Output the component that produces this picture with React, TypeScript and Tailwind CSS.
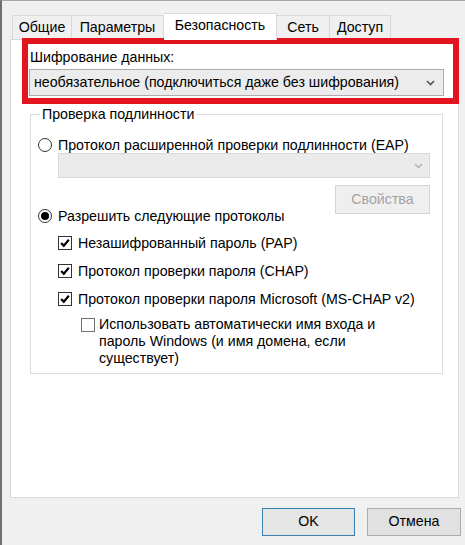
import React from "react";

const font = { fontFamily: '"Liberation Sans", Arial, sans-serif' };

function Chevron({ color }: { color: string }) {
  return (
    <svg width="9" height="6" viewBox="0 0 9 6">
      <path d="M1 1 L4.5 4.5 L8 1" fill="none" stroke={color} strokeWidth="1.6" />
    </svg>
  );
}

function CheckBox({ checked }: { checked: boolean }) {
  return (
    <div
      className={
        "w-[14px] h-[14px] bg-white flex items-center justify-center shrink-0 border " +
        (checked ? "border-[#333333]" : "border-[#707070]")
      }
    >
      {checked && (
        <svg width="10" height="10" viewBox="0 0 10 10">
          <path d="M1.2 5 L3.8 7.8 L8.8 1.8" fill="none" stroke="#000" strokeWidth="2.2" />
        </svg>
      )}
    </div>
  );
}

function Radio({ checked }: { checked: boolean }) {
  return (
    <div className="w-[14px] h-[14px] rounded-full border border-[#333333] bg-white flex items-center justify-center shrink-0">
      {checked && <div className="w-[8px] h-[8px] rounded-full bg-black" />}
    </div>
  );
}

export default function App() {
  return (
    <div
      className="w-[465px] h-[545px] bg-[#f0f0f0] border-l-2 border-t border-l-[#6f6f6f] border-t-[#a8a8a8] relative overflow-hidden text-[14.2px] text-black"
      style={font}
    >
      {/* tabs */}
      <div className="flex items-end ml-[10px] mt-[11px] h-[27px]">
        <div className="w-[60px] h-[24px] border border-b-0 border-[#d9d9d9] bg-[#f0f0f0] flex items-center justify-center">
          Общие
        </div>
        <div className="w-[92px] h-[24px] border border-b-0 border-l-0 border-[#d9d9d9] bg-[#f0f0f0] flex items-center justify-center">
          Параметры
        </div>
        <div className="relative z-10 w-[113px] h-[27px] -mb-px border border-b-0 border-l-0 border-[#d9d9d9] bg-white flex items-center justify-center pb-[3px]">
          Безопасность
        </div>
        <div className="w-[53px] h-[24px] border border-b-0 border-l-0 border-[#d9d9d9] bg-[#f0f0f0] flex items-center justify-center">
          Сеть
        </div>
        <div className="w-[61px] h-[24px] border border-b-0 border-l-0 border-[#d9d9d9] bg-[#f0f0f0] flex items-center justify-center">
          Доступ
        </div>
      </div>

      {/* panel */}
      <div className="ml-[8px] w-[449px] h-[459px] border border-[#d9d9d9] bg-white flex flex-col">
        <div className="ml-[19px] mt-[7px] h-[20px] leading-[20px]">Шифрование данных:</div>
        <div className="ml-[18px] mt-[2px] w-[415px] h-[27px] border border-[#acacac] bg-[#ececec] flex items-center justify-between pl-[4px] pr-[8px]">
          <span>необязательное (подключиться даже без шифрования)</span>
          <Chevron color="#555555" />
        </div>

        {/* group box */}
        <div className="relative ml-[19px] mt-[18px] w-[413px] h-[260px] border border-[#dcdcdc] flex flex-col">
          <div className="absolute left-[9px] -top-[11px] bg-white px-[2px] leading-[20px]">
            Проверка подлинности
          </div>
          <div className="ml-[7px] mt-[23px] h-[14px] flex items-center gap-[6px]">
            <Radio checked={false} />
            <span className="leading-[14px] whitespace-nowrap">
              Протокол расширенной проверки подлинности (EAP)
            </span>
          </div>
          <div className="ml-[27px] mt-[1px] w-[372px] h-[25px] border border-[#d9d9d9] bg-[#ebebeb] flex items-center justify-end pr-[6px]">
            <Chevron color="#b5b5b5" />
          </div>
          <div className="self-end mr-[12px] mt-[7px] w-[95px] h-[29px] border border-[#d5d5d5] bg-[#efefef] flex items-center justify-center text-[#a3a3a3]">
            Свойства
          </div>
          <div className="ml-[7px] -mt-[5px] h-[14px] flex items-center gap-[6px]">
            <Radio checked={true} />
            <span className="leading-[14px] whitespace-nowrap">Разрешить следующие протоколы</span>
          </div>
          <div className="ml-[27px] mt-[13px] h-[14px] flex items-center gap-[6px]">
            <CheckBox checked={true} />
            <span className="leading-[14px] whitespace-nowrap">Незашифрованный пароль (PAP)</span>
          </div>
          <div className="ml-[27px] mt-[14px] h-[14px] flex items-center gap-[6px]">
            <CheckBox checked={true} />
            <span className="leading-[14px] whitespace-nowrap">Протокол проверки пароля (CHAP)</span>
          </div>
          <div className="ml-[27px] mt-[14px] h-[14px] flex items-center gap-[6px]">
            <CheckBox checked={true} />
            <span className="leading-[14px] whitespace-nowrap">
              Протокол проверки пароля Microsoft (MS-CHAP v2)
            </span>
          </div>
          <div className="ml-[50px] mt-[10px] flex items-start gap-[4px]">
            <div className="mt-[2px]">
              <CheckBox checked={false} />
            </div>
            <span className="leading-[17px] w-[300px]">
              Использовать автоматически имя входа и пароль Windows (и имя домена, если
              существует)
            </span>
          </div>
        </div>
      </div>

      {/* buttons */}
      <div className="flex mt-[10px] ml-[260px] gap-[12px]">
        <div className="w-[93px] h-[28px] border border-[#3c7fb1] bg-[#e5e5e5] flex items-center justify-center">
          OK
        </div>
        <div className="w-[94px] h-[28px] border border-[#acacac] bg-[#e1e1e1] flex items-center justify-center">
          Отмена
        </div>
      </div>

      {/* red annotation */}
      <div className="absolute left-[20px] top-[37px] w-[437px] h-[66px] border-[6px] border-[#e3141f] pointer-events-none" />
    </div>
  );
}
